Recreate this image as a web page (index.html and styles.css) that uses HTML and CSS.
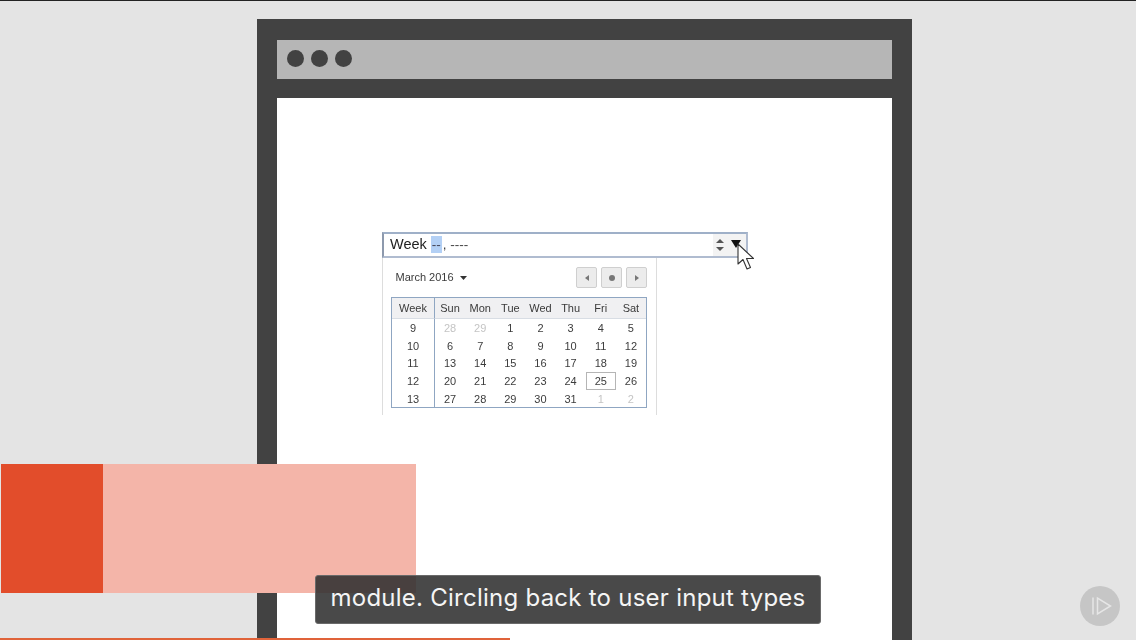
FILE: index.html
```html
<!DOCTYPE html>
<html lang="en">
<head>
    <meta charset="UTF-8">
    <meta name="viewport" content="width=device-width, initial-scale=1.0">
    <title>Week input</title>
    <link rel="stylesheet" href="styles.css">
</head>
<body>
    <div class="stage">
        <div class="browser">
            <div class="titlebar">
                <span class="dot"></span>
                <span class="dot"></span>
                <span class="dot"></span>
            </div>
            <div class="content">
                <div class="week-input">
                    <span class="week-value">Week <span class="selected">--</span><span class="small">, ----</span></span>
                    <span class="spinner">
                        <svg width="8" height="12" viewBox="0 0 8 12"><path d="M4 0 L8 4 H0 Z M0 8 H8 L4 12 Z" fill="#555"/></svg>
                    </span>
                    <span class="drop-btn">
                        <svg width="10" height="8" viewBox="0 0 10 8"><path d="M0 0 H10 L5 8 Z" fill="#111"/></svg>
                    </span>
                </div>
                <div class="popup">
                    <div class="popup-head">
                        <span class="month">March 2016 <svg class="month-caret" width="7" height="4" viewBox="0 0 7 4"><path d="M0 0 H7 L3.5 4 Z" fill="#333"/></svg></span>
                        <div class="nav">
                            <button class="nav-btn"><svg width="4" height="6" viewBox="0 0 4 6"><path d="M4 0 V6 L0 3 Z" fill="#777"/></svg></button>
                            <button class="nav-btn"><svg width="6" height="6" viewBox="0 0 6 6"><circle cx="3" cy="3" r="3" fill="#777"/></svg></button>
                            <button class="nav-btn"><svg width="4" height="6" viewBox="0 0 4 6"><path d="M0 0 V6 L4 3 Z" fill="#777"/></svg></button>
                        </div>
                    </div>
                    <div class="calendar">
                        <div class="cell head wk">Week</div>
                        <div class="cell head">Sun</div>
                        <div class="cell head">Mon</div>
                        <div class="cell head">Tue</div>
                        <div class="cell head">Wed</div>
                        <div class="cell head">Thu</div>
                        <div class="cell head">Fri</div>
                        <div class="cell head">Sat</div>

                        <div class="cell wk">9</div>
                        <div class="cell off">28</div>
                        <div class="cell off">29</div>
                        <div class="cell">1</div>
                        <div class="cell">2</div>
                        <div class="cell">3</div>
                        <div class="cell">4</div>
                        <div class="cell">5</div>

                        <div class="cell wk">10</div>
                        <div class="cell">6</div>
                        <div class="cell">7</div>
                        <div class="cell">8</div>
                        <div class="cell">9</div>
                        <div class="cell">10</div>
                        <div class="cell">11</div>
                        <div class="cell">12</div>

                        <div class="cell wk">11</div>
                        <div class="cell">13</div>
                        <div class="cell">14</div>
                        <div class="cell">15</div>
                        <div class="cell">16</div>
                        <div class="cell">17</div>
                        <div class="cell">18</div>
                        <div class="cell">19</div>

                        <div class="cell wk">12</div>
                        <div class="cell">20</div>
                        <div class="cell">21</div>
                        <div class="cell">22</div>
                        <div class="cell">23</div>
                        <div class="cell">24</div>
                        <div class="cell today">25</div>
                        <div class="cell">26</div>

                        <div class="cell wk">13</div>
                        <div class="cell">27</div>
                        <div class="cell">28</div>
                        <div class="cell">29</div>
                        <div class="cell">30</div>
                        <div class="cell">31</div>
                        <div class="cell off">1</div>
                        <div class="cell off">2</div>
                    </div>
                </div>
            </div>
        </div>

        <svg class="cursor" width="18" height="28" viewBox="0 0 18 28">
            <path d="M1 1 V21 L6 16.5 L10 26 L13.5 24.5 L9.5 15.5 L16.5 15.5 Z" fill="#fff" stroke="#333" stroke-width="1.1" stroke-linejoin="round"/>
        </svg>

        <div class="title-block">
            <div class="title-solid"></div>
            <div class="title-tint"></div>
        </div>

        <div class="caption">module. Circling back to user input types</div>

        <div class="logo">
            <svg width="24" height="24" viewBox="0 0 24 24"><path d="M3 3.5 V20.5 M7.5 4 V20 L20.5 12 Z" fill="none" stroke="#e6e6e6" stroke-width="1.5"/></svg>
        </div>

        <div class="progress"></div>
    </div>
</body>
</html>
```

FILE: styles.css
```css
body {
    margin: 0;
    font-family: "Liberation Sans", Arial, sans-serif;
    color: #333;
}
.stage {
    position: relative;
    width: 1136px;
    height: 640px;
    overflow: hidden;
    background-color: #e4e4e4;
    border-top: 1px solid #222;
    box-sizing: border-box;
    padding: 18px 0 0 257px;
}
.browser {
    width: 655px;
    height: 621px;
    box-sizing: border-box;
    padding: 21px 20px 0;
    background-color: #424242;
    display: flex;
    flex-direction: column;
    gap: 19px;
}
.titlebar {
    height: 39px;
    flex-shrink: 0;
    box-sizing: border-box;
    background-color: #b6b6b6;
    display: flex;
    align-items: center;
    gap: 7px;
    padding: 0 0 2px 10px;
}
.dot {
    width: 17px;
    height: 17px;
    border-radius: 50%;
    background-color: #424242;
}
.content {
    flex: 1;
    background-color: #fff;
    padding: 134px 0 0 105px;
    filter: blur(0.35px);
}

/* week input */
.week-input {
    width: 366px;
    height: 26px;
    box-sizing: border-box;
    border: 2px solid #b0bcd0;
    border-top-color: #9fb0c8;
    border-left-color: #8d99ad;
    display: flex;
    align-items: center;
    padding: 0 0 2px 6px;
    font-size: 14.5px;
    color: #222;
}
.week-value {
    flex: 1;
}
.selected {
    background-color: #b3d0f5;
    color: #445;
    font-size: 13.5px;
    padding: 1px 1px;
}
.small {
    font-size: 13.5px;
    color: #444;
    margin-left: 1px;
}
.spinner {
    width: 14px;
    height: 22px;
    background-color: #f3f3f3;
    display: flex;
    align-items: center;
    justify-content: center;
    margin-top: 2px;
}
.drop-btn {
    width: 19px;
    height: 22px;
    background-color: #f3f3f3;
    display: flex;
    align-items: center;
    justify-content: center;
    margin-top: 2px;
    padding: 0 1px 2px 0;
    box-sizing: border-box;
}

/* calendar popup */
.popup {
    width: 275px;
    height: 157px;
    box-sizing: border-box;
    border-left: 1px solid #ddd;
    border-right: 1px solid #ddd;
    padding: 9px 9px 0 8px;
}
.popup-head {
    display: flex;
    justify-content: space-between;
    align-items: center;
    height: 21px;
    margin-bottom: 9px;
}
.month {
    font-size: 11px;
    padding: 0 0 2px 4.5px;
    color: #3a3a3a;
}
.month-caret {
    margin: 0 0 1px 3px;
}
.nav {
    display: flex;
    gap: 4px;
}
.nav-btn {
    width: 21px;
    height: 21px;
    padding: 0;
    display: flex;
    align-items: center;
    justify-content: center;
    background-color: #ececec;
    border: 1px solid #cfcfcf;
    border-radius: 2px;
}
.calendar {
    width: 256px;
    box-sizing: border-box;
    border: 1px solid #8fa6c2;
    display: grid;
    grid-template-columns: 43px repeat(7, 30.15px);
    grid-template-rows: 21px repeat(5, 17.7px);
    font-size: 11px;
}
.cell {
    display: flex;
    align-items: center;
    justify-content: center;
    color: #3c3c3c;
}
.head {
    background-color: #f0f0f2;
    border-bottom: 1px solid #d8dde4;
    color: #3a3a3a;
}
.wk {
    border-right: 1px solid #8fa6c2;
}
.off {
    color: #c4c4c4;
}
.today {
    border: 1px solid #b5b5b5;
}

/* overlays */
.cursor {
    position: absolute;
    left: 737px;
    top: 242px;
}
.title-block {
    position: absolute;
    left: 1px;
    top: 463px;
    display: flex;
    height: 129px;
}
.title-solid {
    width: 102px;
    background-color: #e24d2b;
}
.title-tint {
    width: 313px;
    background-color: #f4b5a9;
}
.caption {
    position: absolute;
    left: 315px;
    top: 574px;
    width: 506px;
    height: 49px;
    box-sizing: border-box;
    border: 1px solid #6a6a6a;
    border-radius: 3px;
    background-color: rgba(48, 48, 48, 0.88);
    color: #f5f5f5;
    font-family: Inter, "Open Sans", sans-serif;
    font-size: 24px;
    letter-spacing: 0.25px;
    line-height: 44px;
    text-align: center;
    white-space: nowrap;
}
.logo {
    position: absolute;
    left: 1080px;
    top: 585px;
    width: 40px;
    height: 40px;
    box-sizing: border-box;
    padding-left: 3px;
    border-radius: 50%;
    background-color: #c6c6c6;
    display: flex;
    align-items: center;
    justify-content: center;
}
.progress {
    position: absolute;
    left: 0;
    bottom: 0;
    width: 510px;
    height: 2px;
    background-color: #e0633a;
}
```
